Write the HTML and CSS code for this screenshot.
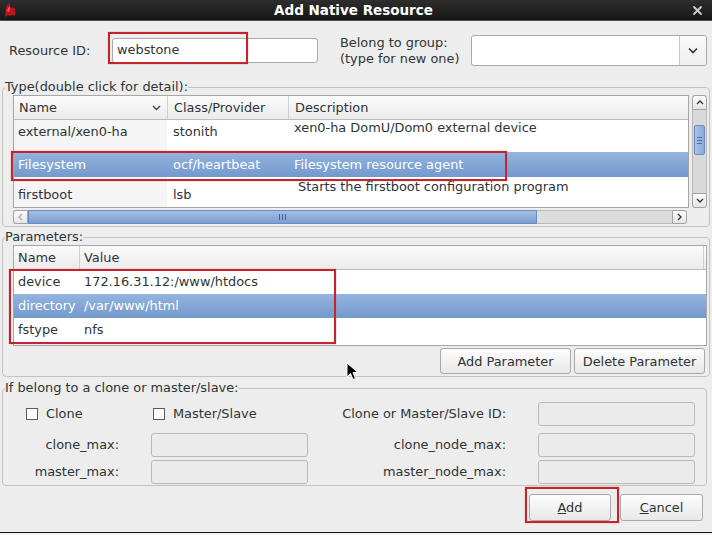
FILE: index.html
```html
<!DOCTYPE html>
<html>
<head>
<meta charset="utf-8">
<title>Add Native Resource</title>
<link rel="stylesheet" href="styles.css">
</head>
<body>
<div class="window">
  <div class="titlebar">
    <svg class="app-icon" width="14" height="16" viewBox="0 0 14 16">
      <path d="M2 15 L3 6 Q4 2 7 1 Q6 4 8 6 Q10 4 12 7 Q13 10 12 14 Q9 12 7 14 Q5 12 2 15 Z" fill="#c0141c"/>
      <path d="M4 9 Q5 5 7 4 Q7 7 6 10 Z" fill="#f25a5a"/>
    </svg>
    <div class="title">Add Native Resource</div>
    <svg class="close" width="11" height="11" viewBox="0 0 11 11">
      <path d="M2 2 L9 9 M9 2 L2 9" stroke="#d0d0d0" stroke-width="1.8" stroke-linecap="round"/>
    </svg>
  </div>

  <div class="content">
    <div class="top-row">
      <span class="lbl-rid">Resource ID:</span>
      <div class="entry rid">webstone</div>
      <div class="lbl-group">Belong to group:<br>(type for new one)</div>
      <div class="combo">
        <div class="combo-text"></div>
        <div class="combo-btn">
          <svg width="10" height="7" viewBox="0 0 10 7"><path d="M1 1.5 L5 5.5 L9 1.5" fill="none" stroke="#333" stroke-width="1.6"/></svg>
        </div>
      </div>
    </div>

    <fieldset class="group type-group">
      <legend>Type(double click for detail):</legend>
      <div class="type-grid">
        <div class="table type-table">
          <div class="trow thead">
            <div class="cell c-name">Name
              <svg class="sort" width="9" height="6" viewBox="0 0 9 6"><path d="M1 1 L4.5 4.5 L8 1" fill="none" stroke="#444" stroke-width="1.4"/></svg>
            </div>
            <div class="cell c-class sep">Class/Provider</div>
            <div class="cell c-desc sep">Description</div>
          </div>
          <div class="trow r1">
            <div class="cell c-name">external/xen0-ha</div>
            <div class="cell c-class">stonith</div>
            <div class="cell c-desc">xen0-ha DomU/Dom0 external device</div>
          </div>
          <div class="trow r2 selected">
            <div class="cell c-name">Filesystem</div>
            <div class="cell c-class">ocf/heartbeat</div>
            <div class="cell c-desc">Filesystem resource agent</div>
          </div>
          <div class="trow r3">
            <div class="cell c-name">firstboot</div>
            <div class="cell c-class">lsb</div>
            <div class="cell c-desc">Starts the firstboot configuration program</div>
          </div>
        </div>
        <div class="vscroll">
          <div class="sbtn sbtn-up"><svg width="8" height="5" viewBox="0 0 8 5"><path d="M1 4 L4 1 L7 4" fill="none" stroke="#333" stroke-width="1.3"/></svg></div>
          <div class="vtrough">
            <div class="vthumb"><span></span><span></span><span></span></div>
          </div>
          <div class="sbtn sbtn-down"><svg width="8" height="5" viewBox="0 0 8 5"><path d="M1 1 L4 4 L7 1" fill="none" stroke="#333" stroke-width="1.3"/></svg></div>
        </div>
        <div class="hscroll">
          <div class="sbtn sbtn-left"><svg width="5" height="8" viewBox="0 0 5 8"><path d="M4 1 L1 4 L4 7" fill="none" stroke="#aaa" stroke-width="1.3"/></svg></div>
          <div class="hthumb"><span></span><span></span><span></span></div>
          <div class="htrough"></div>
          <div class="sbtn sbtn-right"><svg width="5" height="8" viewBox="0 0 5 8"><path d="M1 1 L4 4 L1 7" fill="none" stroke="#333" stroke-width="1.3"/></svg></div>
        </div>
      </div>
    </fieldset>

    <fieldset class="group param-group">
      <legend>Parameters:</legend>
      <div class="table param-table">
        <div class="prow thead">
          <div class="cell p-name">Name</div>
          <div class="cell p-val sep">Value</div>
        </div>
        <div class="prow">
          <div class="cell p-name">device</div>
          <div class="cell p-val">172.16.31.12:/www/htdocs</div>
        </div>
        <div class="prow selected">
          <div class="cell p-name">directory</div>
          <div class="cell p-val">/var/www/html</div>
        </div>
        <div class="prow">
          <div class="cell p-name">fstype</div>
          <div class="cell p-val">nfs</div>
        </div>
      </div>
      <div class="param-buttons">
        <button class="btn btn-param">Add Parameter</button>
        <button class="btn btn-param">Delete Parameter</button>
      </div>
    </fieldset>

    <fieldset class="group clone-group">
      <legend>If belong to a clone or master/slave:</legend>
      <div class="clone-grid">
        <label class="check check-clone"><span class="box"></span>Clone</label>
        <span></span>
        <label class="check check-ms"><span class="box"></span>Master/Slave</label>
        <span class="rlabel">Clone or Master/Slave ID:</span>
        <span></span>
        <div class="entry disabled"></div>

        <span class="rlabel">clone_max:</span>
        <span></span>
        <div class="entry disabled"></div>
        <span class="rlabel">clone_node_max:</span>
        <span></span>
        <div class="entry disabled"></div>

        <span class="rlabel">master_max:</span>
        <span></span>
        <div class="entry disabled"></div>
        <span class="rlabel">master_node_max:</span>
        <span></span>
        <div class="entry disabled"></div>
      </div>
    </fieldset>

    <div class="dialog-buttons">
      <button class="btn btn-dlg"><u>A</u>dd</button>
      <button class="btn btn-dlg btn-cancel"><u>C</u>ancel</button>
    </div>
  </div>

  <div class="annot annot-rid"></div>
  <div class="annot annot-fs"></div>
  <div class="annot annot-params"></div>
  <div class="annot annot-add"></div>

  <svg class="cursor" width="14" height="20" viewBox="0 0 14 20">
    <path d="M1 1 L1 15 L4.5 11.5 L7 17.5 L9.5 16.5 L7 10.5 L12 10.5 Z" fill="#000" stroke="#fff" stroke-width="1"/>
  </svg>
</div>
</body>
</html>
```

FILE: styles.css
```css
* { box-sizing: border-box; }

html, body {
  margin: 0;
  padding: 0;
}

body {
  width: 712px;
  height: 535px;
  overflow: hidden;
  background: #f4f4f4;
  font-family: "DejaVu Sans", "Noto Sans", sans-serif;
  font-size: 12.9px;
  color: #2e3436;
}

.window {
  position: relative;
  width: 712px;
  height: 533px;
  background: #ededed;
  border-bottom: 1px solid #111;
}

/* ---------- title bar ---------- */
.titlebar {
  height: 21px;
  display: grid;
  grid-template-columns: 1fr auto 1fr;
  align-items: center;
  background: linear-gradient(#2e2e2e, #161616);
  border-bottom: 1px solid #4e535a;
}
.app-icon { justify-self: start; margin-left: 3px; }
.title {
  color: #fff;
  font-weight: bold;
  font-size: 13.5px;
  line-height: 20px;
  padding-right: 5px;
}
.close { justify-self: end; margin-right: 9px; }

/* ---------- content ---------- */
.content { padding-top: 14px; }

.top-row {
  display: flex;
  align-items: center;
  height: 31px;
  padding-left: 9px;
  margin-bottom: 13px;
}
.lbl-rid { width: 103px; }
.entry {
  background: #fff;
  border: 1px solid #a9a9a9;
  border-radius: 3px;
  height: 24px;
  line-height: 22px;
  padding-left: 4px;
}
.rid { width: 206px; height: 25px; }
.lbl-group {
  margin-left: 22px;
  width: 131px;
  line-height: 16px;
  white-space: nowrap;
}
.combo {
  width: 236px;
  height: 31px;
  display: flex;
  background: #fff;
  border: 1px solid #a9a9a9;
  border-radius: 3px;
}
.combo-text { flex: 1; }
.combo-btn {
  width: 27px;
  border-left: 1px solid #c9c9c9;
  background: linear-gradient(#fafafa, #f0f0f0);
  border-radius: 0 3px 3px 0;
  display: flex;
  align-items: center;
  justify-content: center;
}

/* ---------- group boxes ---------- */
fieldset.group {
  margin: 0 2px 0 2px;
  padding: 0 2px 2px 10px;
  border: 1px solid #c2c2c2;
  border-radius: 4px;
  min-width: 0;
}
fieldset.group legend {
  padding: 0;
  margin-left: -8px;
  line-height: 16px;
  height: 16px;
  color: #2e3436;
}

/* ---------- type table ---------- */
.type-grid {
  display: grid;
  grid-template-columns: 676px 15px;
  grid-template-rows: 113px 14px;
  column-gap: 3px;
  row-gap: 2px;
}
.table {
  background: #fff;
  border: 1px solid #a6a6a6;
  overflow: hidden;
}
.trow {
  display: grid;
  grid-template-columns: 153px 121px 1fr;
  overflow: hidden;
}
.prow {
  display: grid;
  grid-template-columns: 65px 1fr;
  height: 24px;
  line-height: 24px;
}
.cell {
  white-space: nowrap;
  overflow: hidden;
}
.thead {
  height: 24px;
  line-height: 23px;
  background: linear-gradient(#fbfbfb, #ebebeb);
  border-bottom: 1px solid #bdbdbd;
}
.thead .cell { position: relative; }
.thead .sep { border-left: 1px solid #cfcfcf; }
.thead .c-name { padding-left: 5px; display: flex; justify-content: space-between; padding-right: 6px; align-items: center; }
.sort { margin-top: 1px; }
.c-name { padding-left: 4px; }
.c-class { padding-left: 6px; }
.c-desc { padding-left: 6px; }
.thead .c-desc, .thead .c-class { padding-left: 6px; }

.trow .c-name { background: #f5f5f5; }
.thead .c-name { background: none; }

.r1 { height: 32px; line-height: 16px; }
.r1 .c-name, .r1 .c-class { padding-top: 4px; }
.r1 .c-desc { margin-top: 0; }

.r2 { height: 25px; line-height: 25px; }

.r3 { height: 30px; line-height: 16px; }
.r3 .c-name, .r3 .c-class { padding-top: 10px; }
.r3 .c-desc { padding-top: 2px; padding-left: 10px; }

.selected {
  background: linear-gradient(#93b4df, #7399cc);
  color: #fff;
}
.selected .c-name { background: none; }

/* ---------- scrollbars ---------- */
.sbtn {
  display: flex;
  align-items: center;
  justify-content: center;
  background: linear-gradient(#fbfbfb, #e6e6e6);
  border: 1px solid #a3a3a3;
}
.vscroll {
  grid-row: 1;
  grid-column: 2;
  display: flex;
  flex-direction: column;
  background: #d9d9d9;
  border-radius: 3px;
}
.sbtn-up { height: 15px; border-radius: 3px 3px 0 0; }
.sbtn-down { height: 15px; border-radius: 0 0 3px 3px; }
.vtrough {
  flex: 1;
  padding-top: 15px;
  border-left: 1px solid #b9b9b9;
  border-right: 1px solid #b9b9b9;
}
.vthumb {
  height: 30px;
  margin: 0 1px;
  background: linear-gradient(90deg, #a8c2e6, #8aaad8);
  border: 1px solid #6a8cc0;
  border-radius: 2px;
  display: flex;
  flex-direction: column;
  align-items: center;
  justify-content: center;
  gap: 2px;
}
.vthumb span { width: 5px; height: 1px; background: #4f70a4; }

.hscroll {
  grid-row: 2;
  grid-column: 1;
  width: 674px;
  display: flex;
  background: #dadada;
}
.sbtn-left { width: 15px; border-radius: 3px 0 0 3px; }
.sbtn-right { width: 15px; border-radius: 0 3px 3px 0; }
.hthumb {
  width: 509px;
  background: linear-gradient(#a4bfe5, #7c9ed2);
  border: 1px solid #6a8cc0;
  display: flex;
  align-items: center;
  justify-content: center;
  gap: 2px;
}
.hthumb span { width: 1px; height: 6px; background: #3e5f95; }
.htrough {
  flex: 1;
  border-top: 1px solid #b9b9b9;
  border-bottom: 1px solid #b9b9b9;
  background: #dcdcdc;
}

/* ---------- parameters ---------- */
.param-group { margin-top: 2px !important; }
.param-table {
  width: 694px;
  height: 101px;
}
.param-table .thead { line-height: 23px; }
.p-name { padding-left: 4px; }
.p-val { padding-left: 5px; }
.thead .p-val { padding-left: 4px; border-right: 1px solid #cfcfcf; margin-right: 2px; }

.param-buttons {
  display: flex;
  justify-content: flex-end;
  gap: 3px;
  margin-top: 2px;
  padding-right: 2px;
}
.btn {
  font-family: inherit;
  font-size: 12.9px;
  color: #2e3436;
  background: linear-gradient(#fdfdfd, #e8e8e8);
  border: 1px solid #a9a9a9;
  border-radius: 3px;
  padding: 0;
}
.btn-param { width: 131px; height: 26px; }

/* ---------- clone group ---------- */
.clone-group { margin: 3px 5px 0 2px !important; padding: 0 0 1px 0 !important; }
.clone-group legend { margin-left: 2px !important; }
.clone-grid {
  display: grid;
  grid-template-columns: 116px 32px 157px 198px 32px 157px;
  grid-template-rows: 24px 31px 27px;
  align-items: end;
  padding-top: 6px;
}
.clone-grid > * { line-height: 24px; height: 24px; white-space: nowrap; }
.rlabel { text-align: right; }
.check { display: flex; align-items: center; }
.check-clone { padding-left: 23px; }
.check-ms { padding-left: 2px; }
.box {
  width: 12px;
  height: 12px;
  background: #fff;
  border: 1px solid #5c5c5c;
  margin-right: 8px;
  flex: none;
}
.entry.disabled {
  background: #ebebeb;
  border-color: #b9b9b9;
}

/* ---------- dialog buttons ---------- */
.dialog-buttons {
  display: flex;
  justify-content: flex-end;
  gap: 9px;
  padding-right: 9px;
  margin-top: 8px;
}
.btn-dlg { width: 82px; height: 27px; }
.btn-cancel { width: 83px; }

/* ---------- annotation boxes ---------- */
.annot {
  position: absolute;
  border: 2px solid #c4242b;
  box-shadow: 0 0 1px #e07070;
}
.annot-rid { left: 108px; top: 32px; width: 140px; height: 32px; }
.annot-fs { left: 11px; top: 151px; width: 496px; height: 30px; }
.annot-params { left: 9px; top: 269px; width: 327px; height: 75px; }
.annot-add { left: 525px; top: 487px; width: 94px; height: 36px; }

.cursor {
  position: absolute;
  left: 346px;
  top: 362px;
}
```
